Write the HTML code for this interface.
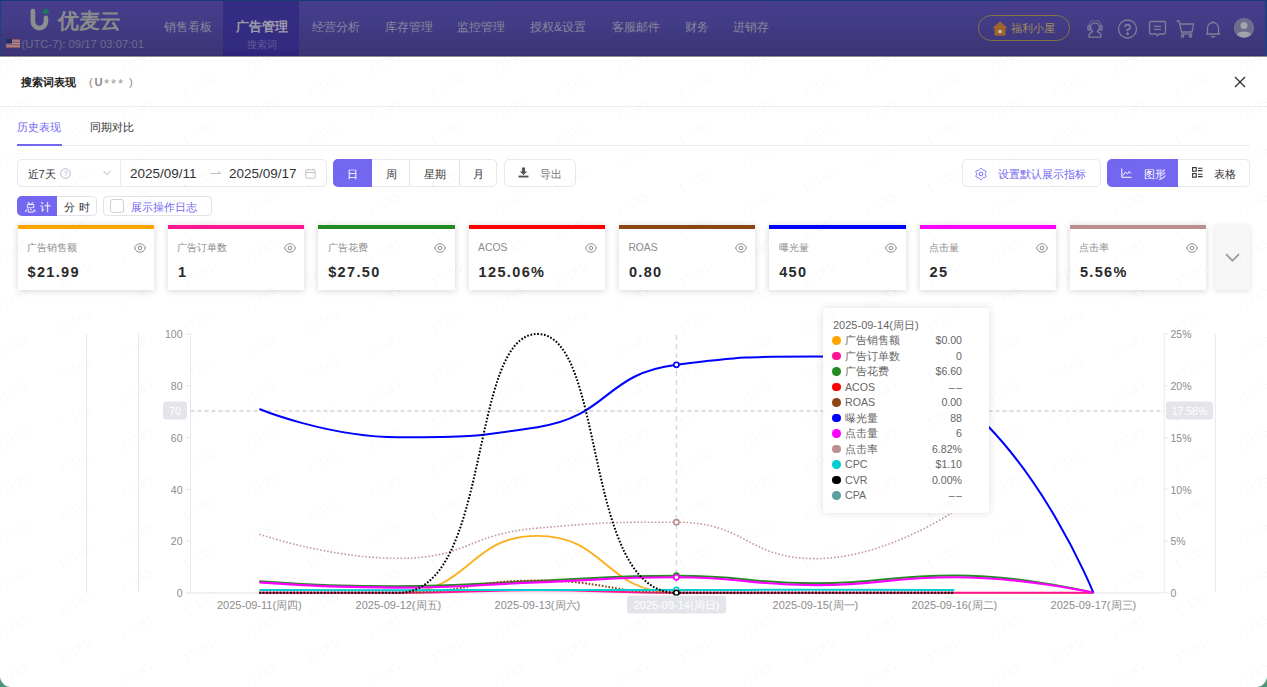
<!DOCTYPE html>
<html><head><meta charset="utf-8">
<style>
*{box-sizing:border-box;margin:0;padding:0}
html,body{width:1267px;height:687px;overflow:hidden}
body{position:relative;background:#4a9777;font-family:"Liberation Sans",sans-serif;color:#333}
.abs{position:absolute;white-space:nowrap}
#hdr{position:absolute;left:0;top:0;width:1267px;height:56px;background:linear-gradient(#463e8b,#423b85 45%,#3c3474);border-top:1px solid #173a72;border-left:1px solid #1f3f7e;border-right:2px solid #1f3f7e;border-bottom:1px solid #352d72}
.nav{position:absolute;top:20px;font-size:12px;line-height:13px;color:#88879c}
#act{position:absolute;left:222px;top:0;width:76px;height:55px;background:linear-gradient(#352c84,#332b80 85%,#2c237a)}
#modal{position:absolute;left:0;top:56px;width:1267px;height:631px;background:#fff;border-radius:0 0 11px 11px;overflow:hidden;border-top:1px solid #8e8d88}
.chart{position:absolute;left:0;top:0}
.btn{position:absolute;height:28px;top:159px;border:1px solid #e8e8ed;border-radius:5px;background:#fff}
.card{position:absolute;top:225px;width:136.6px;height:65px;background:#fff;box-shadow:0 1px 7px rgba(0,0,0,.17);border-top:4px solid}
.card .lb{position:absolute;left:9.5px;top:12px;font-size:10.3px;line-height:13px;color:#8c8c8c}
.card .val{position:absolute;left:10px;top:35px;font-size:14.5px;line-height:16px;font-weight:bold;color:#2a2a2a;letter-spacing:1.35px}
.card svg{position:absolute;left:116.3px;top:13.8px}
#tip{position:absolute;left:823px;top:308px;width:166px;height:205px;background:#fff;border-radius:4px;box-shadow:0 0 10px rgba(0,0,0,.13);font-size:10.6px;color:#666}
#tip .row{position:absolute;left:0;width:166px;height:15px}
#tip .dot{position:absolute;left:9.3px;top:3.2px;width:8.6px;height:8.6px;border-radius:50%}
#tip .nm{position:absolute;left:22px;top:0;line-height:15px}
#tip .v{position:absolute;right:27px;top:0;line-height:15px}
</style></head><body>
<div id="hdr">
  <div id="act"></div>
  <svg class="abs" style="left:27.2px;top:6.3px" width="24" height="25" viewBox="0 0 24 25">
    <path d="M4.9 4 V14.6 A6.5 6.5 0 0 0 17.9 14.6 V10.8" fill="none" stroke="#8e8e8e" stroke-width="4.7" stroke-linecap="round"/>
    <path d="M17.8 1.4 C19.5 2.4 21.2 3.6 21.2 5 C21.2 6.2 20 6.8 17.8 6.8 C15.6 6.8 14.4 6.2 14.4 5 C14.4 3.6 16.1 2.4 17.8 1.4z" fill="#177a5a"/>
  </svg>
  <div class="abs" style="left:57px;top:7px;font-size:21px;line-height:26px;font-weight:bold;color:#8b8b8b">优麦云</div>
  <svg class="abs" style="left:5px;top:38px" width="14" height="9" viewBox="0 0 14 9">
    <rect width="14" height="9" fill="#8e5560"/>
    <rect y="1.3" width="14" height="1.3" fill="#a8939a"/><rect y="3.9" width="14" height="1.3" fill="#a8939a"/><rect y="6.5" width="14" height="1.3" fill="#a8939a"/>
    <rect width="6" height="4.6" fill="#1f2e5e"/>
  </svg>
  <div class="abs" style="left:20.5px;top:36.5px;font-size:11.3px;line-height:12px;color:#6d6b8e">(UTC-7): 09/17 03:07:01</div>
  <div class="nav" style="left:163px">销售看板</div>
  <div class="nav" style="left:235px;top:19px;font-size:13px;font-weight:bold;color:#9e9daa">广告管理</div>
  <div class="abs" style="left:246px;top:38px;font-size:10px;line-height:12px;color:#625c94">搜索词</div>
  <div class="nav" style="left:311px">经营分析</div>
  <div class="nav" style="left:384px">库存管理</div>
  <div class="nav" style="left:456px">监控管理</div>
  <div class="nav" style="left:529px">授权&amp;设置</div>
  <div class="nav" style="left:611px">客服邮件</div>
  <div class="nav" style="left:684px">财务</div>
  <div class="nav" style="left:732px">进销存</div>
  <div class="abs" style="left:976.8px;top:14px;width:92px;height:26px;border:1px solid #85703f;border-radius:13px"></div>
  <svg class="abs" style="left:991px;top:19.5px" width="16" height="15" viewBox="0 0 16 15">
    <path d="M8 0.5 L15.5 7 H13.5 V14.5 H2.5 V7 H0.5z" fill="#a0652a"/>
    <rect x="6.5" y="9" width="3" height="3" fill="#d6c3a0"/>
  </svg>
  <div class="abs" style="left:1010px;top:21px;font-size:11px;line-height:13px;color:#a08c5c">福利小屋</div>
  <svg class="abs" style="left:1085px;top:18.5px" width="18" height="18" viewBox="0 0 18 18" fill="none" stroke="#7f7d98" stroke-width="1.3" stroke-linejoin="round">
    <path d="M3 17.2 V15.4 C3 13.2 5.2 12.2 6.6 11.6 C5.3 10.6 4.6 9.2 4.6 7.2 A4.4 4.4 0 0 1 13.4 7.2 C13.4 9.2 12.7 10.6 11.4 11.6 C12.8 12.2 15 13.2 15 15.4 V17.2 Z"/>
    <rect x="1.9" y="5.6" width="2" height="4.6" rx="1"/><rect x="14.1" y="5.6" width="2" height="4.6" rx="1"/>
    <path d="M3 5.8 A6 6 0 0 1 15 5.8" stroke-width="0.9"/>
  </svg>
  <svg class="abs" style="left:1115.5px;top:17.5px" width="21" height="20" viewBox="-1 -1 21 20" fill="none" stroke="#7f7d98" stroke-width="1.3">
    <circle cx="9.5" cy="9" r="9"/><path d="M7 7 A2.5 2.5 0 1 1 9.5 9.6 V11.3" stroke-width="1.7"/><circle cx="9.5" cy="13.8" r=".9" fill="#7f7d98"/>
  </svg>
  <svg class="abs" style="left:1146.8px;top:18.5px" width="19" height="18" viewBox="0 0 19 18" fill="none" stroke="#7f7d98" stroke-width="1.3">
    <path d="M3 1.5 H16 A1.5 1.5 0 0 1 17.5 3 V12.5 A1.5 1.5 0 0 1 16 14 H11 L9.5 15.8 L8 14 H3 A1.5 1.5 0 0 1 1.5 12.5 V3 A1.5 1.5 0 0 1 3 1.5z"/><path d="M6 6.3 H13 M6 9.3 H13"/>
  </svg>
  <svg class="abs" style="left:1174.5px;top:18.5px" width="19" height="18" viewBox="0 0 19 18" fill="none" stroke="#7f7d98" stroke-width="1.3">
    <path d="M0.5 1 H3 L5.5 12 H16 L17.5 4 H4"/><path d="M5 14 h11"/><circle cx="6.5" cy="16" r="1.2"/><circle cx="14.5" cy="16" r="1.2"/>
  </svg>
  <svg class="abs" style="left:1203.8px;top:18.5px" width="16" height="18" viewBox="0 0 16 18" fill="none" stroke="#7f7d98" stroke-width="1.3">
    <path d="M2.5 14 V8 A5.5 5.5 0 0 1 13.5 8 V14 H15 H1z"/><path d="M6 16 Q8 18 10 16"/><path d="M8 1 V2.5"/>
  </svg>
  <svg class="abs" style="left:1231.7px;top:16.3px" width="22" height="22" viewBox="0 0 22 22">
    <circle cx="11" cy="11" r="10.1" fill="#757190"/><circle cx="11" cy="11" r="9" fill="#6f6b8c"/>
    <circle cx="11" cy="8.6" r="3.5" fill="#a3a3ad"/><path d="M4.2 17.4 C5.6 13.6 16.4 13.6 17.8 17.4 A9.2 9.2 0 0 1 4.2 17.4z" fill="#a3a3ad"/>
  </svg>
</div>

<div id="modal">
</div>
<svg class="chart" width="1267" height="687" viewBox="0 0 1267 687">
<g><line x1="86.6" y1="334" x2="86.6" y2="592.8" stroke="#e6e8ef" stroke-width="1"/><line x1="138.5" y1="334" x2="138.5" y2="592.8" stroke="#e6e8ef" stroke-width="1"/><line x1="190.5" y1="334" x2="190.5" y2="592.8" stroke="#e6e8ef" stroke-width="1"/><line x1="1164.2" y1="334" x2="1164.2" y2="592.8" stroke="#e6e8ef" stroke-width="1"/><line x1="1215.3" y1="334" x2="1215.3" y2="592.8" stroke="#e6e8ef" stroke-width="1"/><line x1="186" y1="592.8" x2="1164.2" y2="592.8" stroke="#e6e8ef" stroke-width="1.2"/><line x1="185.5" y1="541.0" x2="190.5" y2="541.0" stroke="#e6e8ef"/><line x1="185.5" y1="489.3" x2="190.5" y2="489.3" stroke="#e6e8ef"/><line x1="185.5" y1="437.5" x2="190.5" y2="437.5" stroke="#e6e8ef"/><line x1="185.5" y1="385.8" x2="190.5" y2="385.8" stroke="#e6e8ef"/><line x1="185.5" y1="334.0" x2="190.5" y2="334.0" stroke="#e6e8ef"/><line x1="1164.2" y1="592.8" x2="1168" y2="592.8" stroke="#e6e8ef"/><line x1="1164.2" y1="541.0" x2="1168" y2="541.0" stroke="#e6e8ef"/><line x1="1164.2" y1="489.3" x2="1168" y2="489.3" stroke="#e6e8ef"/><line x1="1164.2" y1="437.5" x2="1168" y2="437.5" stroke="#e6e8ef"/><line x1="1164.2" y1="385.8" x2="1168" y2="385.8" stroke="#e6e8ef"/><line x1="1164.2" y1="334.0" x2="1168" y2="334.0" stroke="#e6e8ef"/></g>
<g fill="#8c8c8c" font-size="10.5" font-family="Liberation Sans, sans-serif"><text x="182.5" y="597.2" text-anchor="end">0</text><text x="182.5" y="545.4" text-anchor="end">20</text><text x="182.5" y="493.7" text-anchor="end">40</text><text x="182.5" y="441.9" text-anchor="end">60</text><text x="182.5" y="390.2" text-anchor="end">80</text><text x="182.5" y="338.4" text-anchor="end">100</text><text x="1170.5" y="597.2">0</text><text x="1170.5" y="545.4">5%</text><text x="1170.5" y="493.7">10%</text><text x="1170.5" y="441.9">15%</text><text x="1170.5" y="390.2">20%</text><text x="1170.5" y="338.4">25%</text><text x="259.4" y="608.8" text-anchor="middle" font-size="11">2025-09-11(周四)</text><text x="398.4" y="608.8" text-anchor="middle" font-size="11">2025-09-12(周五)</text><text x="537.4" y="608.8" text-anchor="middle" font-size="11">2025-09-13(周六)</text><text x="815.4" y="608.8" text-anchor="middle" font-size="11">2025-09-15(周一)</text><text x="954.4" y="608.8" text-anchor="middle" font-size="11">2025-09-16(周二)</text><text x="1093.4" y="608.8" text-anchor="middle" font-size="11">2025-09-17(周三)</text></g>
<g><line x1="190.5" y1="411" x2="1164" y2="411" stroke="#bdbdbd" stroke-width="1" stroke-dasharray="4 3"/><line x1="676.4" y1="335" x2="676.4" y2="592.8" stroke="#d3d6e0" stroke-width="1.3" stroke-dasharray="5 4"/></g>
<g><path d="M259.40 592.80C259.40 592.80 331.59 592.80 398.40 592.80C470.59 592.80 467.90 535.89 537.40 535.89C606.90 535.89 604.21 592.80 676.40 592.80C743.21 592.80 745.90 592.80 815.40 592.80C884.90 592.80 884.90 592.80 954.40 592.80C1023.90 592.80 1093.40 592.80 1093.40 592.80" fill="none" stroke="#fcaf1a" stroke-width="1.8" stroke-linejoin="round"/><path d="M259.40 592.80C259.40 592.80 328.91 592.80 398.40 592.80C467.91 592.80 467.90 590.21 537.40 590.21C606.90 590.21 606.89 592.80 676.40 592.80C745.89 592.80 745.90 592.80 815.40 592.80C884.90 592.80 884.90 592.80 954.40 592.80C1023.90 592.80 1093.40 592.80 1093.40 592.80" fill="none" stroke="#ff1493" stroke-width="2" stroke-linejoin="round"/><path d="M259.40 581.15C259.40 581.15 328.90 586.33 398.40 586.33C467.90 586.33 467.90 583.55 537.40 580.90C606.90 578.24 606.93 575.72 676.40 575.72C745.93 575.72 745.90 583.22 815.40 583.22C884.90 583.22 885.11 575.46 954.40 575.46C1024.11 575.46 1093.40 592.80 1093.40 592.80" fill="none" stroke="#228b22" stroke-width="2" stroke-linejoin="round"/><path d="M259.40 592.80C259.40 592.80 329.03 592.80 398.40 592.80C468.03 592.80 467.90 580.58 537.40 580.58C606.90 580.58 606.77 592.80 676.40 592.80C745.77 592.80 745.90 592.80 815.40 592.80C884.90 592.80 954.40 592.80 954.40 592.80" fill="none" stroke="#8b4513" stroke-width="2" stroke-linejoin="round" stroke-dasharray="1.7 1.7"/><path d="M259.40 409.05C259.40 409.05 328.29 437.26 398.40 437.26C467.29 437.26 470.99 437.26 537.40 427.17C609.99 416.13 603.78 373.86 676.40 364.80C742.78 356.52 747.19 356.52 815.40 356.52C886.19 356.52 902.27 356.52 954.40 396.11C1041.27 462.10 1093.40 592.80 1093.40 592.80" fill="none" stroke="#0000ff" stroke-width="2" stroke-linejoin="round"/><path d="M259.40 582.45C259.40 582.45 328.90 587.62 398.40 587.62C467.90 587.62 467.90 585.04 537.40 582.45C606.90 579.86 606.93 577.27 676.40 577.27C745.93 577.27 745.90 585.04 815.40 585.04C884.90 585.04 885.06 577.27 954.40 577.27C1024.06 577.27 1093.40 592.80 1093.40 592.80" fill="none" stroke="#ff00ff" stroke-width="2.2" stroke-linejoin="round"/><path d="M259.40 534.21C259.40 534.21 329.19 558.33 398.40 558.33C468.19 558.33 467.13 534.13 537.40 528.10C606.13 522.20 608.02 522.20 676.40 522.20C747.02 522.20 746.67 558.64 815.40 558.64C885.67 558.64 954.40 511.02 954.40 511.02" fill="none" stroke="#c49a9a" stroke-width="1.6" stroke-linejoin="round" stroke-dasharray="1.6 1.9"/><path d="M259.40 589.95C259.40 589.95 328.90 590.21 398.40 590.21C467.90 590.21 467.90 589.95 537.40 589.95C606.90 589.95 606.90 589.95 676.40 589.95C745.90 589.95 745.90 589.82 815.40 589.82C884.90 589.82 954.40 589.95 954.40 589.95" fill="none" stroke="#00ced1" stroke-width="2" stroke-linejoin="round"/><path d="M259.40 592.80C259.40 592.80 353.75 592.80 398.40 592.80C492.75 592.80 467.90 334.00 537.40 334.00C606.90 334.00 582.05 592.80 676.40 592.80C721.05 592.80 745.90 592.80 815.40 592.80C884.90 592.80 954.40 592.80 954.40 592.80" fill="none" stroke="#000000" stroke-width="2" stroke-linejoin="round" stroke-dasharray="1.7 1.7"/></g>
<g><circle cx="676.4" cy="364.8" r="2.6" fill="#fff" stroke="#0000ff" stroke-width="1.6"/><circle cx="676.4" cy="522.2" r="2.6" fill="#fff" stroke="#bc8f8f" stroke-width="1.6"/><circle cx="676.4" cy="575.7" r="2.6" fill="#fff" stroke="#228b22" stroke-width="1.6"/><circle cx="676.4" cy="577.3" r="2.6" fill="#fff" stroke="#ff00ff" stroke-width="1.6"/><circle cx="676.4" cy="590.0" r="2.6" fill="#fff" stroke="#00ced1" stroke-width="1.6"/><circle cx="676.4" cy="592.8" r="2.6" fill="#fff" stroke="#000000" stroke-width="1.6"/></g>
<rect x="163" y="401.5" width="24" height="18" rx="3" fill="#e4e5ea"/>
<text x="175" y="414.5" text-anchor="middle" fill="#fff" font-size="10.5" font-family="Liberation Sans, sans-serif">70</text>
<rect x="1166" y="401.5" width="47" height="18" rx="3" fill="#e4e5ea"/>
<text x="1189.5" y="414.5" text-anchor="middle" fill="#fff" font-size="10.5" font-family="Liberation Sans, sans-serif">17.58%</text>
<rect x="627" y="595.5" width="99" height="18" rx="3" fill="#e4e5ea"/>
<text x="676.5" y="608.8" text-anchor="middle" fill="#fff" font-size="11" font-family="Liberation Sans, sans-serif">2025-09-14(周日)</text>
</svg>
<div class="abs" style="left:20.5px;top:75.3px;font-size:11.2px;line-height:14px;font-weight:bold;color:#222">搜索词表现</div>
<div class="abs" style="left:89px;top:75px;font-size:11.2px;line-height:14px;color:#888">(</div>
<div class="abs" style="left:94.5px;top:75px;font-size:11.2px;line-height:14px;font-weight:bold;color:#8a8a8a">U</div>
<div class="abs" style="left:104px;top:76.8px;font-size:13px;line-height:14px;color:#999;letter-spacing:2px">***</div>
<div class="abs" style="left:129px;top:75px;font-size:11.2px;line-height:14px;color:#888">)</div>
<svg class="abs" style="left:1233.5px;top:75.5px" width="12" height="12" viewBox="0 0 12 12"><path d="M1 1 L11 11 M11 1 L1 11" stroke="#333" stroke-width="1.4"/></svg>
<div class="abs" style="left:0;top:106px;width:1267px;height:1px;background:#eeeeee"></div>
<div class="abs" style="left:17px;top:119.5px;font-size:11.2px;line-height:14px;color:#7367f0">历史表现</div>
<div class="abs" style="left:90px;top:119.5px;font-size:11.2px;line-height:14px;color:#333">同期对比</div>
<div class="abs" style="left:17px;top:145px;width:1233px;height:1px;background:#ececec"></div>
<div class="abs" style="left:17px;top:144px;width:45px;height:2px;background:#7367f0"></div>

<!-- controls -->
<div class="btn" style="left:17px;width:310px"></div>
<div class="abs" style="left:120px;top:160px;width:1px;height:26px;background:#ececf0"></div>
<div class="abs" style="left:27.5px;top:167px;font-size:11.2px;line-height:14px;color:#333">近7天</div>
<svg class="abs" style="left:60px;top:168px" width="11" height="11" viewBox="0 0 11 11"><circle cx="5.5" cy="5.5" r="4.8" fill="none" stroke="#a5b0c6" stroke-width=".9"/><text x="5.5" y="8.3" font-size="7.5" text-anchor="middle" fill="#a5b0c6" font-family="Liberation Sans, sans-serif">?</text></svg>
<svg class="abs" style="left:103px;top:170px" width="8" height="6" viewBox="0 0 8 6"><path d="M0.5 0.8 L4 4.8 L7.5 0.8" fill="none" stroke="#b5b5b5" stroke-width="1"/></svg>
<div class="abs" style="left:130px;top:167px;font-size:13.5px;line-height:14px;color:#333">2025/09/11</div>
<svg class="abs" style="left:210px;top:170px" width="12" height="6" viewBox="0 0 12 6"><path d="M0.5 3.5 H10.5 M8 1.2 L10.8 3.5" fill="none" stroke="#bdbdbd" stroke-width="1"/></svg>
<div class="abs" style="left:229px;top:167px;font-size:13.5px;line-height:14px;color:#333">2025/09/17</div>
<svg class="abs" style="left:305px;top:168px" width="11" height="11" viewBox="0 0 11 11" fill="none" stroke="#c4c4c4" stroke-width="1"><rect x="0.8" y="1.8" width="9.4" height="8.4" rx=".5"/><path d="M0.8 4.5 H10.2 M3 0.5 V2.5 M8 0.5 V2.5"/></svg>

<div class="btn" style="left:333px;width:164px"></div>
<div class="abs" style="left:333px;top:159px;width:39px;height:28px;background:#7367f0;border-radius:5px 0 0 5px"></div>
<div class="abs" style="left:409px;top:160px;width:1px;height:26px;background:#e3e3e8"></div>
<div class="abs" style="left:459px;top:160px;width:1px;height:26px;background:#e3e3e8"></div>
<div class="abs" style="left:347px;top:167px;font-size:11.2px;line-height:14px;color:#fff">日</div>
<div class="abs" style="left:385.5px;top:167px;font-size:11.2px;line-height:14px;color:#333">周</div>
<div class="abs" style="left:423.5px;top:167px;font-size:11.2px;line-height:14px;color:#333">星期</div>
<div class="abs" style="left:473px;top:167px;font-size:11.2px;line-height:14px;color:#333">月</div>

<div class="btn" style="left:504px;width:72px"></div>
<svg class="abs" style="left:518px;top:167px" width="11" height="11" viewBox="0 0 11 11" fill="#555"><path d="M4 0.5 H7 V4.5 H9.3 L5.5 8 L1.7 4.5 H4z"/><rect x="0.5" y="8.6" width="10" height="1.9"/></svg>
<div class="abs" style="left:539.5px;top:167px;font-size:11.2px;line-height:14px;color:#777">导出</div>

<div class="btn" style="left:962px;width:139px"></div>
<svg class="abs" style="left:975.3px;top:167.5px" width="12" height="12" viewBox="0 0 12 12" fill="none" stroke="#7367f0" stroke-width="1"><path d="M10.89 8.82 L10.55 9.18 L10.04 9.39 L9.46 9.46 L8.91 9.47 L8.55 9.65 L8.23 9.85 L7.88 10.03 L7.55 10.25 L7.27 10.73 L6.92 11.19 L6.48 11.53 L6.00 11.65 L5.52 11.53 L5.08 11.19 L4.73 10.73 L4.45 10.25 L4.12 10.03 L3.78 9.85 L3.45 9.65 L3.09 9.47 L2.54 9.46 L1.96 9.39 L1.45 9.18 L1.11 8.83 L0.97 8.35 L1.04 7.80 L1.27 7.27 L1.54 6.79 L1.57 6.39 L1.55 6.00 L1.57 5.61 L1.54 5.21 L1.27 4.73 L1.04 4.20 L0.97 3.65 L1.11 3.18 L1.45 2.82 L1.96 2.61 L2.54 2.54 L3.09 2.53 L3.45 2.35 L3.78 2.15 L4.12 1.97 L4.45 1.75 L4.73 1.27 L5.08 0.81 L5.52 0.47 L6.00 0.35 L6.48 0.47 L6.92 0.81 L7.27 1.27 L7.55 1.75 L7.88 1.97 L8.23 2.15 L8.55 2.35 L8.91 2.53 L9.46 2.54 L10.04 2.61 L10.55 2.82 L10.89 3.17 L11.03 3.65 L10.96 4.20 L10.73 4.73 L10.46 5.21 L10.43 5.61 L10.45 6.00 L10.43 6.39 L10.46 6.79 L10.73 7.27 L10.96 7.80 L11.03 8.35 L10.89 8.82z"/><circle cx="6" cy="6" r="1.9"/></svg>
<div class="abs" style="left:998px;top:167px;font-size:11.2px;line-height:14px;color:#7367f0">设置默认展示指标</div>

<div class="btn" style="left:1107px;width:143px"></div>
<div class="abs" style="left:1107px;top:159px;width:71px;height:28px;background:#7367f0;border-radius:5px 0 0 5px"></div>
<svg class="abs" style="left:1121px;top:168px" width="11" height="10" viewBox="0 0 11 10" fill="none" stroke="#fff" stroke-width="1"><path d="M0.8 0.5 V9.3 H10.5"/><path d="M2 7.5 L4.5 4 L6.5 5.8 L8.3 3.5 L10 5.5"/></svg>
<div class="abs" style="left:1143.5px;top:167px;font-size:11.2px;line-height:14px;color:#fff">图形</div>
<svg class="abs" style="left:1192px;top:167px" width="11" height="11" viewBox="0 0 11 11" fill="none" stroke="#333" stroke-width="1.1"><rect x="0.6" y="0.6" width="3.6" height="3.6"/><rect x="0.6" y="6.6" width="3.6" height="3.6"/><path d="M6 1.2 H10.5 M6 3.6 H10.5 M6 7.2 H10.5 M6 9.6 H10.5"/></svg>
<div class="abs" style="left:1214px;top:167px;font-size:11.2px;line-height:14px;color:#333">表格</div>

<!-- row 2 -->
<div class="abs" style="left:17px;top:196px;width:80px;height:20px;border:1px solid #e3e3e8;border-radius:4px;background:#fff"></div>
<div class="abs" style="left:17px;top:196px;width:40px;height:20px;background:#7367f0;border-radius:5px 0 0 5px"></div>
<div class="abs" style="left:24.5px;top:200px;font-size:11.2px;line-height:14px;color:#fff;letter-spacing:4px">总计</div>
<div class="abs" style="left:63.5px;top:200px;font-size:11.2px;line-height:14px;color:#333;letter-spacing:4px">分时</div>
<div class="abs" style="left:103px;top:196px;width:109px;height:20px;border:1px solid #e3e3e8;border-radius:4px;background:#fff"></div>
<div class="abs" style="left:110px;top:199px;width:14px;height:14px;border:1px solid #d0d0d5;border-radius:3px;background:#fff"></div>
<div class="abs" style="left:131px;top:200px;font-size:11.2px;line-height:14px;color:#7367f0">展示操作日志</div>

<!-- cards -->
<div class="card" style="left:17.5px;border-color:#ffa500"><div class="lb">广告销售额</div><svg width="12" height="10" viewBox="0 0 12 10" fill="none" stroke="#8a8a8a" stroke-width="1"><path d="M0.6 5 C1.8 1.6 4 0.8 6 0.8 C8 0.8 10.2 1.6 11.4 5 C10.2 8.4 8 9.2 6 9.2 C4 9.2 1.8 8.4 0.6 5z"/><circle cx="6" cy="5" r="1.8"/></svg><div class="val">$21.99</div></div>
<div class="card" style="left:167.9px;border-color:#ff1493"><div class="lb">广告订单数</div><svg width="12" height="10" viewBox="0 0 12 10" fill="none" stroke="#8a8a8a" stroke-width="1"><path d="M0.6 5 C1.8 1.6 4 0.8 6 0.8 C8 0.8 10.2 1.6 11.4 5 C10.2 8.4 8 9.2 6 9.2 C4 9.2 1.8 8.4 0.6 5z"/><circle cx="6" cy="5" r="1.8"/></svg><div class="val">1</div></div>
<div class="card" style="left:318.2px;border-color:#228b22"><div class="lb">广告花费</div><svg width="12" height="10" viewBox="0 0 12 10" fill="none" stroke="#8a8a8a" stroke-width="1"><path d="M0.6 5 C1.8 1.6 4 0.8 6 0.8 C8 0.8 10.2 1.6 11.4 5 C10.2 8.4 8 9.2 6 9.2 C4 9.2 1.8 8.4 0.6 5z"/><circle cx="6" cy="5" r="1.8"/></svg><div class="val">$27.50</div></div>
<div class="card" style="left:468.6px;border-color:#ff0000"><div class="lb">ACOS</div><svg width="12" height="10" viewBox="0 0 12 10" fill="none" stroke="#8a8a8a" stroke-width="1"><path d="M0.6 5 C1.8 1.6 4 0.8 6 0.8 C8 0.8 10.2 1.6 11.4 5 C10.2 8.4 8 9.2 6 9.2 C4 9.2 1.8 8.4 0.6 5z"/><circle cx="6" cy="5" r="1.8"/></svg><div class="val">125.06%</div></div>
<div class="card" style="left:618.9px;border-color:#8b4513"><div class="lb">ROAS</div><svg width="12" height="10" viewBox="0 0 12 10" fill="none" stroke="#8a8a8a" stroke-width="1"><path d="M0.6 5 C1.8 1.6 4 0.8 6 0.8 C8 0.8 10.2 1.6 11.4 5 C10.2 8.4 8 9.2 6 9.2 C4 9.2 1.8 8.4 0.6 5z"/><circle cx="6" cy="5" r="1.8"/></svg><div class="val">0.80</div></div>
<div class="card" style="left:769.2px;border-color:#0000ff"><div class="lb">曝光量</div><svg width="12" height="10" viewBox="0 0 12 10" fill="none" stroke="#8a8a8a" stroke-width="1"><path d="M0.6 5 C1.8 1.6 4 0.8 6 0.8 C8 0.8 10.2 1.6 11.4 5 C10.2 8.4 8 9.2 6 9.2 C4 9.2 1.8 8.4 0.6 5z"/><circle cx="6" cy="5" r="1.8"/></svg><div class="val">450</div></div>
<div class="card" style="left:919.6px;border-color:#ff00ff"><div class="lb">点击量</div><svg width="12" height="10" viewBox="0 0 12 10" fill="none" stroke="#8a8a8a" stroke-width="1"><path d="M0.6 5 C1.8 1.6 4 0.8 6 0.8 C8 0.8 10.2 1.6 11.4 5 C10.2 8.4 8 9.2 6 9.2 C4 9.2 1.8 8.4 0.6 5z"/><circle cx="6" cy="5" r="1.8"/></svg><div class="val">25</div></div>
<div class="card" style="left:1069.9px;border-color:#bc8f8f"><div class="lb">点击率</div><svg width="12" height="10" viewBox="0 0 12 10" fill="none" stroke="#8a8a8a" stroke-width="1"><path d="M0.6 5 C1.8 1.6 4 0.8 6 0.8 C8 0.8 10.2 1.6 11.4 5 C10.2 8.4 8 9.2 6 9.2 C4 9.2 1.8 8.4 0.6 5z"/><circle cx="6" cy="5" r="1.8"/></svg><div class="val">5.56%</div></div>
<div class="abs" style="left:1215px;top:225px;width:35px;height:65px;background:#f7f7f7;box-shadow:0 1px 5px rgba(0,0,0,.12)"></div>
<svg class="abs" style="left:1225.2px;top:252.6px" width="15" height="10" viewBox="0 0 15 10"><path d="M1 1.2 L7.5 7.7 L14 1.2" fill="none" stroke="#999" stroke-width="1.7"/></svg>

<!-- tooltip -->
<div id="tip">
  <div class="abs" style="left:10px;top:11.3px;line-height:12px;font-size:11px;color:#666">2025-09-14(周日)</div>
  <div class="row" style="top:25px"><span class="dot" style="background:#ffa500"></span><span class="nm">广告销售额</span><span class="v">$0.00</span></div>
  <div class="row" style="top:40.5px"><span class="dot" style="background:#ff1493"></span><span class="nm">广告订单数</span><span class="v">0</span></div>
  <div class="row" style="top:56px"><span class="dot" style="background:#228b22"></span><span class="nm">广告花费</span><span class="v">$6.60</span></div>
  <div class="row" style="top:71.5px"><span class="dot" style="background:#ff0000"></span><span class="nm">ACOS</span><span class="v" style="letter-spacing:1.6px;right:25.4px">––</span></div>
  <div class="row" style="top:87px"><span class="dot" style="background:#8b4513"></span><span class="nm">ROAS</span><span class="v">0.00</span></div>
  <div class="row" style="top:102.5px"><span class="dot" style="background:#0000ff"></span><span class="nm">曝光量</span><span class="v">88</span></div>
  <div class="row" style="top:118px"><span class="dot" style="background:#ff00ff"></span><span class="nm">点击量</span><span class="v">6</span></div>
  <div class="row" style="top:133.5px"><span class="dot" style="background:#bc8f8f"></span><span class="nm">点击率</span><span class="v">6.82%</span></div>
  <div class="row" style="top:149px"><span class="dot" style="background:#00ced1"></span><span class="nm">CPC</span><span class="v">$1.10</span></div>
  <div class="row" style="top:164.5px"><span class="dot" style="background:#000"></span><span class="nm">CVR</span><span class="v">0.00%</span></div>
  <div class="row" style="top:180px"><span class="dot" style="background:#5f9ea0"></span><span class="nm">CPA</span><span class="v" style="letter-spacing:1.6px;right:25.4px">––</span></div>
</div>
<svg class="abs" style="left:0;top:0;pointer-events:none" width="1267" height="687"><defs><clipPath id="mc"><rect x="0" y="57" width="1267" height="630"/></clipPath></defs><g clip-path="url(#mc)" fill="#000" fill-opacity="0.04" font-size="12.5" text-rendering="geometricPrecision" font-family="Liberation Sans, sans-serif"><text transform="translate(-111.4 63.5) rotate(-30)" text-anchor="middle" dy="4">17185</text><text transform="translate(-49.4 87.0) rotate(-30)" text-anchor="middle" dy="4">17185</text><text transform="translate(12.6 63.5) rotate(-30)" text-anchor="middle" dy="4">17185</text><text transform="translate(74.6 87.0) rotate(-30)" text-anchor="middle" dy="4">17185</text><text transform="translate(136.6 63.5) rotate(-30)" text-anchor="middle" dy="4">17185</text><text transform="translate(198.6 87.0) rotate(-30)" text-anchor="middle" dy="4">17185</text><text transform="translate(260.6 63.5) rotate(-30)" text-anchor="middle" dy="4">17185</text><text transform="translate(322.6 87.0) rotate(-30)" text-anchor="middle" dy="4">17185</text><text transform="translate(384.6 63.5) rotate(-30)" text-anchor="middle" dy="4">17185</text><text transform="translate(446.6 87.0) rotate(-30)" text-anchor="middle" dy="4">17185</text><text transform="translate(508.6 63.5) rotate(-30)" text-anchor="middle" dy="4">17185</text><text transform="translate(570.6 87.0) rotate(-30)" text-anchor="middle" dy="4">17185</text><text transform="translate(632.6 63.5) rotate(-30)" text-anchor="middle" dy="4">17185</text><text transform="translate(694.6 87.0) rotate(-30)" text-anchor="middle" dy="4">17185</text><text transform="translate(756.6 63.5) rotate(-30)" text-anchor="middle" dy="4">17185</text><text transform="translate(818.6 87.0) rotate(-30)" text-anchor="middle" dy="4">17185</text><text transform="translate(880.6 63.5) rotate(-30)" text-anchor="middle" dy="4">17185</text><text transform="translate(942.6 87.0) rotate(-30)" text-anchor="middle" dy="4">17185</text><text transform="translate(1004.6 63.5) rotate(-30)" text-anchor="middle" dy="4">17185</text><text transform="translate(1066.6 87.0) rotate(-30)" text-anchor="middle" dy="4">17185</text><text transform="translate(1128.6 63.5) rotate(-30)" text-anchor="middle" dy="4">17185</text><text transform="translate(1190.6 87.0) rotate(-30)" text-anchor="middle" dy="4">17185</text><text transform="translate(1252.6 63.5) rotate(-30)" text-anchor="middle" dy="4">17185</text><text transform="translate(1314.6 87.0) rotate(-30)" text-anchor="middle" dy="4">17185</text><text transform="translate(1376.6 63.5) rotate(-30)" text-anchor="middle" dy="4">17185</text><text transform="translate(1438.6 87.0) rotate(-30)" text-anchor="middle" dy="4">17185</text><text transform="translate(-111.4 110.5) rotate(-30)" text-anchor="middle" dy="4">17185</text><text transform="translate(-49.4 134.0) rotate(-30)" text-anchor="middle" dy="4">17185</text><text transform="translate(12.6 110.5) rotate(-30)" text-anchor="middle" dy="4">17185</text><text transform="translate(74.6 134.0) rotate(-30)" text-anchor="middle" dy="4">17185</text><text transform="translate(136.6 110.5) rotate(-30)" text-anchor="middle" dy="4">17185</text><text transform="translate(198.6 134.0) rotate(-30)" text-anchor="middle" dy="4">17185</text><text transform="translate(260.6 110.5) rotate(-30)" text-anchor="middle" dy="4">17185</text><text transform="translate(322.6 134.0) rotate(-30)" text-anchor="middle" dy="4">17185</text><text transform="translate(384.6 110.5) rotate(-30)" text-anchor="middle" dy="4">17185</text><text transform="translate(446.6 134.0) rotate(-30)" text-anchor="middle" dy="4">17185</text><text transform="translate(508.6 110.5) rotate(-30)" text-anchor="middle" dy="4">17185</text><text transform="translate(570.6 134.0) rotate(-30)" text-anchor="middle" dy="4">17185</text><text transform="translate(632.6 110.5) rotate(-30)" text-anchor="middle" dy="4">17185</text><text transform="translate(694.6 134.0) rotate(-30)" text-anchor="middle" dy="4">17185</text><text transform="translate(756.6 110.5) rotate(-30)" text-anchor="middle" dy="4">17185</text><text transform="translate(818.6 134.0) rotate(-30)" text-anchor="middle" dy="4">17185</text><text transform="translate(880.6 110.5) rotate(-30)" text-anchor="middle" dy="4">17185</text><text transform="translate(942.6 134.0) rotate(-30)" text-anchor="middle" dy="4">17185</text><text transform="translate(1004.6 110.5) rotate(-30)" text-anchor="middle" dy="4">17185</text><text transform="translate(1066.6 134.0) rotate(-30)" text-anchor="middle" dy="4">17185</text><text transform="translate(1128.6 110.5) rotate(-30)" text-anchor="middle" dy="4">17185</text><text transform="translate(1190.6 134.0) rotate(-30)" text-anchor="middle" dy="4">17185</text><text transform="translate(1252.6 110.5) rotate(-30)" text-anchor="middle" dy="4">17185</text><text transform="translate(1314.6 134.0) rotate(-30)" text-anchor="middle" dy="4">17185</text><text transform="translate(1376.6 110.5) rotate(-30)" text-anchor="middle" dy="4">17185</text><text transform="translate(1438.6 134.0) rotate(-30)" text-anchor="middle" dy="4">17185</text><text transform="translate(-111.4 157.5) rotate(-30)" text-anchor="middle" dy="4">17185</text><text transform="translate(-49.4 181.0) rotate(-30)" text-anchor="middle" dy="4">17185</text><text transform="translate(12.6 157.5) rotate(-30)" text-anchor="middle" dy="4">17185</text><text transform="translate(74.6 181.0) rotate(-30)" text-anchor="middle" dy="4">17185</text><text transform="translate(136.6 157.5) rotate(-30)" text-anchor="middle" dy="4">17185</text><text transform="translate(198.6 181.0) rotate(-30)" text-anchor="middle" dy="4">17185</text><text transform="translate(260.6 157.5) rotate(-30)" text-anchor="middle" dy="4">17185</text><text transform="translate(322.6 181.0) rotate(-30)" text-anchor="middle" dy="4">17185</text><text transform="translate(384.6 157.5) rotate(-30)" text-anchor="middle" dy="4">17185</text><text transform="translate(446.6 181.0) rotate(-30)" text-anchor="middle" dy="4">17185</text><text transform="translate(508.6 157.5) rotate(-30)" text-anchor="middle" dy="4">17185</text><text transform="translate(570.6 181.0) rotate(-30)" text-anchor="middle" dy="4">17185</text><text transform="translate(632.6 157.5) rotate(-30)" text-anchor="middle" dy="4">17185</text><text transform="translate(694.6 181.0) rotate(-30)" text-anchor="middle" dy="4">17185</text><text transform="translate(756.6 157.5) rotate(-30)" text-anchor="middle" dy="4">17185</text><text transform="translate(818.6 181.0) rotate(-30)" text-anchor="middle" dy="4">17185</text><text transform="translate(880.6 157.5) rotate(-30)" text-anchor="middle" dy="4">17185</text><text transform="translate(942.6 181.0) rotate(-30)" text-anchor="middle" dy="4">17185</text><text transform="translate(1004.6 157.5) rotate(-30)" text-anchor="middle" dy="4">17185</text><text transform="translate(1066.6 181.0) rotate(-30)" text-anchor="middle" dy="4">17185</text><text transform="translate(1128.6 157.5) rotate(-30)" text-anchor="middle" dy="4">17185</text><text transform="translate(1190.6 181.0) rotate(-30)" text-anchor="middle" dy="4">17185</text><text transform="translate(1252.6 157.5) rotate(-30)" text-anchor="middle" dy="4">17185</text><text transform="translate(1314.6 181.0) rotate(-30)" text-anchor="middle" dy="4">17185</text><text transform="translate(1376.6 157.5) rotate(-30)" text-anchor="middle" dy="4">17185</text><text transform="translate(1438.6 181.0) rotate(-30)" text-anchor="middle" dy="4">17185</text><text transform="translate(-111.4 204.5) rotate(-30)" text-anchor="middle" dy="4">17185</text><text transform="translate(-49.4 228.0) rotate(-30)" text-anchor="middle" dy="4">17185</text><text transform="translate(12.6 204.5) rotate(-30)" text-anchor="middle" dy="4">17185</text><text transform="translate(74.6 228.0) rotate(-30)" text-anchor="middle" dy="4">17185</text><text transform="translate(136.6 204.5) rotate(-30)" text-anchor="middle" dy="4">17185</text><text transform="translate(198.6 228.0) rotate(-30)" text-anchor="middle" dy="4">17185</text><text transform="translate(260.6 204.5) rotate(-30)" text-anchor="middle" dy="4">17185</text><text transform="translate(322.6 228.0) rotate(-30)" text-anchor="middle" dy="4">17185</text><text transform="translate(384.6 204.5) rotate(-30)" text-anchor="middle" dy="4">17185</text><text transform="translate(446.6 228.0) rotate(-30)" text-anchor="middle" dy="4">17185</text><text transform="translate(508.6 204.5) rotate(-30)" text-anchor="middle" dy="4">17185</text><text transform="translate(570.6 228.0) rotate(-30)" text-anchor="middle" dy="4">17185</text><text transform="translate(632.6 204.5) rotate(-30)" text-anchor="middle" dy="4">17185</text><text transform="translate(694.6 228.0) rotate(-30)" text-anchor="middle" dy="4">17185</text><text transform="translate(756.6 204.5) rotate(-30)" text-anchor="middle" dy="4">17185</text><text transform="translate(818.6 228.0) rotate(-30)" text-anchor="middle" dy="4">17185</text><text transform="translate(880.6 204.5) rotate(-30)" text-anchor="middle" dy="4">17185</text><text transform="translate(942.6 228.0) rotate(-30)" text-anchor="middle" dy="4">17185</text><text transform="translate(1004.6 204.5) rotate(-30)" text-anchor="middle" dy="4">17185</text><text transform="translate(1066.6 228.0) rotate(-30)" text-anchor="middle" dy="4">17185</text><text transform="translate(1128.6 204.5) rotate(-30)" text-anchor="middle" dy="4">17185</text><text transform="translate(1190.6 228.0) rotate(-30)" text-anchor="middle" dy="4">17185</text><text transform="translate(1252.6 204.5) rotate(-30)" text-anchor="middle" dy="4">17185</text><text transform="translate(1314.6 228.0) rotate(-30)" text-anchor="middle" dy="4">17185</text><text transform="translate(1376.6 204.5) rotate(-30)" text-anchor="middle" dy="4">17185</text><text transform="translate(1438.6 228.0) rotate(-30)" text-anchor="middle" dy="4">17185</text><text transform="translate(-111.4 251.5) rotate(-30)" text-anchor="middle" dy="4">17185</text><text transform="translate(-49.4 275.0) rotate(-30)" text-anchor="middle" dy="4">17185</text><text transform="translate(12.6 251.5) rotate(-30)" text-anchor="middle" dy="4">17185</text><text transform="translate(74.6 275.0) rotate(-30)" text-anchor="middle" dy="4">17185</text><text transform="translate(136.6 251.5) rotate(-30)" text-anchor="middle" dy="4">17185</text><text transform="translate(198.6 275.0) rotate(-30)" text-anchor="middle" dy="4">17185</text><text transform="translate(260.6 251.5) rotate(-30)" text-anchor="middle" dy="4">17185</text><text transform="translate(322.6 275.0) rotate(-30)" text-anchor="middle" dy="4">17185</text><text transform="translate(384.6 251.5) rotate(-30)" text-anchor="middle" dy="4">17185</text><text transform="translate(446.6 275.0) rotate(-30)" text-anchor="middle" dy="4">17185</text><text transform="translate(508.6 251.5) rotate(-30)" text-anchor="middle" dy="4">17185</text><text transform="translate(570.6 275.0) rotate(-30)" text-anchor="middle" dy="4">17185</text><text transform="translate(632.6 251.5) rotate(-30)" text-anchor="middle" dy="4">17185</text><text transform="translate(694.6 275.0) rotate(-30)" text-anchor="middle" dy="4">17185</text><text transform="translate(756.6 251.5) rotate(-30)" text-anchor="middle" dy="4">17185</text><text transform="translate(818.6 275.0) rotate(-30)" text-anchor="middle" dy="4">17185</text><text transform="translate(880.6 251.5) rotate(-30)" text-anchor="middle" dy="4">17185</text><text transform="translate(942.6 275.0) rotate(-30)" text-anchor="middle" dy="4">17185</text><text transform="translate(1004.6 251.5) rotate(-30)" text-anchor="middle" dy="4">17185</text><text transform="translate(1066.6 275.0) rotate(-30)" text-anchor="middle" dy="4">17185</text><text transform="translate(1128.6 251.5) rotate(-30)" text-anchor="middle" dy="4">17185</text><text transform="translate(1190.6 275.0) rotate(-30)" text-anchor="middle" dy="4">17185</text><text transform="translate(1252.6 251.5) rotate(-30)" text-anchor="middle" dy="4">17185</text><text transform="translate(1314.6 275.0) rotate(-30)" text-anchor="middle" dy="4">17185</text><text transform="translate(1376.6 251.5) rotate(-30)" text-anchor="middle" dy="4">17185</text><text transform="translate(1438.6 275.0) rotate(-30)" text-anchor="middle" dy="4">17185</text><text transform="translate(-111.4 298.5) rotate(-30)" text-anchor="middle" dy="4">17185</text><text transform="translate(-49.4 322.0) rotate(-30)" text-anchor="middle" dy="4">17185</text><text transform="translate(12.6 298.5) rotate(-30)" text-anchor="middle" dy="4">17185</text><text transform="translate(74.6 322.0) rotate(-30)" text-anchor="middle" dy="4">17185</text><text transform="translate(136.6 298.5) rotate(-30)" text-anchor="middle" dy="4">17185</text><text transform="translate(198.6 322.0) rotate(-30)" text-anchor="middle" dy="4">17185</text><text transform="translate(260.6 298.5) rotate(-30)" text-anchor="middle" dy="4">17185</text><text transform="translate(322.6 322.0) rotate(-30)" text-anchor="middle" dy="4">17185</text><text transform="translate(384.6 298.5) rotate(-30)" text-anchor="middle" dy="4">17185</text><text transform="translate(446.6 322.0) rotate(-30)" text-anchor="middle" dy="4">17185</text><text transform="translate(508.6 298.5) rotate(-30)" text-anchor="middle" dy="4">17185</text><text transform="translate(570.6 322.0) rotate(-30)" text-anchor="middle" dy="4">17185</text><text transform="translate(632.6 298.5) rotate(-30)" text-anchor="middle" dy="4">17185</text><text transform="translate(694.6 322.0) rotate(-30)" text-anchor="middle" dy="4">17185</text><text transform="translate(756.6 298.5) rotate(-30)" text-anchor="middle" dy="4">17185</text><text transform="translate(818.6 322.0) rotate(-30)" text-anchor="middle" dy="4">17185</text><text transform="translate(880.6 298.5) rotate(-30)" text-anchor="middle" dy="4">17185</text><text transform="translate(942.6 322.0) rotate(-30)" text-anchor="middle" dy="4">17185</text><text transform="translate(1004.6 298.5) rotate(-30)" text-anchor="middle" dy="4">17185</text><text transform="translate(1066.6 322.0) rotate(-30)" text-anchor="middle" dy="4">17185</text><text transform="translate(1128.6 298.5) rotate(-30)" text-anchor="middle" dy="4">17185</text><text transform="translate(1190.6 322.0) rotate(-30)" text-anchor="middle" dy="4">17185</text><text transform="translate(1252.6 298.5) rotate(-30)" text-anchor="middle" dy="4">17185</text><text transform="translate(1314.6 322.0) rotate(-30)" text-anchor="middle" dy="4">17185</text><text transform="translate(1376.6 298.5) rotate(-30)" text-anchor="middle" dy="4">17185</text><text transform="translate(1438.6 322.0) rotate(-30)" text-anchor="middle" dy="4">17185</text><text transform="translate(-111.4 345.5) rotate(-30)" text-anchor="middle" dy="4">17185</text><text transform="translate(-49.4 369.0) rotate(-30)" text-anchor="middle" dy="4">17185</text><text transform="translate(12.6 345.5) rotate(-30)" text-anchor="middle" dy="4">17185</text><text transform="translate(74.6 369.0) rotate(-30)" text-anchor="middle" dy="4">17185</text><text transform="translate(136.6 345.5) rotate(-30)" text-anchor="middle" dy="4">17185</text><text transform="translate(198.6 369.0) rotate(-30)" text-anchor="middle" dy="4">17185</text><text transform="translate(260.6 345.5) rotate(-30)" text-anchor="middle" dy="4">17185</text><text transform="translate(322.6 369.0) rotate(-30)" text-anchor="middle" dy="4">17185</text><text transform="translate(384.6 345.5) rotate(-30)" text-anchor="middle" dy="4">17185</text><text transform="translate(446.6 369.0) rotate(-30)" text-anchor="middle" dy="4">17185</text><text transform="translate(508.6 345.5) rotate(-30)" text-anchor="middle" dy="4">17185</text><text transform="translate(570.6 369.0) rotate(-30)" text-anchor="middle" dy="4">17185</text><text transform="translate(632.6 345.5) rotate(-30)" text-anchor="middle" dy="4">17185</text><text transform="translate(694.6 369.0) rotate(-30)" text-anchor="middle" dy="4">17185</text><text transform="translate(756.6 345.5) rotate(-30)" text-anchor="middle" dy="4">17185</text><text transform="translate(818.6 369.0) rotate(-30)" text-anchor="middle" dy="4">17185</text><text transform="translate(880.6 345.5) rotate(-30)" text-anchor="middle" dy="4">17185</text><text transform="translate(942.6 369.0) rotate(-30)" text-anchor="middle" dy="4">17185</text><text transform="translate(1004.6 345.5) rotate(-30)" text-anchor="middle" dy="4">17185</text><text transform="translate(1066.6 369.0) rotate(-30)" text-anchor="middle" dy="4">17185</text><text transform="translate(1128.6 345.5) rotate(-30)" text-anchor="middle" dy="4">17185</text><text transform="translate(1190.6 369.0) rotate(-30)" text-anchor="middle" dy="4">17185</text><text transform="translate(1252.6 345.5) rotate(-30)" text-anchor="middle" dy="4">17185</text><text transform="translate(1314.6 369.0) rotate(-30)" text-anchor="middle" dy="4">17185</text><text transform="translate(1376.6 345.5) rotate(-30)" text-anchor="middle" dy="4">17185</text><text transform="translate(1438.6 369.0) rotate(-30)" text-anchor="middle" dy="4">17185</text><text transform="translate(-111.4 392.5) rotate(-30)" text-anchor="middle" dy="4">17185</text><text transform="translate(-49.4 416.0) rotate(-30)" text-anchor="middle" dy="4">17185</text><text transform="translate(12.6 392.5) rotate(-30)" text-anchor="middle" dy="4">17185</text><text transform="translate(74.6 416.0) rotate(-30)" text-anchor="middle" dy="4">17185</text><text transform="translate(136.6 392.5) rotate(-30)" text-anchor="middle" dy="4">17185</text><text transform="translate(198.6 416.0) rotate(-30)" text-anchor="middle" dy="4">17185</text><text transform="translate(260.6 392.5) rotate(-30)" text-anchor="middle" dy="4">17185</text><text transform="translate(322.6 416.0) rotate(-30)" text-anchor="middle" dy="4">17185</text><text transform="translate(384.6 392.5) rotate(-30)" text-anchor="middle" dy="4">17185</text><text transform="translate(446.6 416.0) rotate(-30)" text-anchor="middle" dy="4">17185</text><text transform="translate(508.6 392.5) rotate(-30)" text-anchor="middle" dy="4">17185</text><text transform="translate(570.6 416.0) rotate(-30)" text-anchor="middle" dy="4">17185</text><text transform="translate(632.6 392.5) rotate(-30)" text-anchor="middle" dy="4">17185</text><text transform="translate(694.6 416.0) rotate(-30)" text-anchor="middle" dy="4">17185</text><text transform="translate(756.6 392.5) rotate(-30)" text-anchor="middle" dy="4">17185</text><text transform="translate(818.6 416.0) rotate(-30)" text-anchor="middle" dy="4">17185</text><text transform="translate(880.6 392.5) rotate(-30)" text-anchor="middle" dy="4">17185</text><text transform="translate(942.6 416.0) rotate(-30)" text-anchor="middle" dy="4">17185</text><text transform="translate(1004.6 392.5) rotate(-30)" text-anchor="middle" dy="4">17185</text><text transform="translate(1066.6 416.0) rotate(-30)" text-anchor="middle" dy="4">17185</text><text transform="translate(1128.6 392.5) rotate(-30)" text-anchor="middle" dy="4">17185</text><text transform="translate(1190.6 416.0) rotate(-30)" text-anchor="middle" dy="4">17185</text><text transform="translate(1252.6 392.5) rotate(-30)" text-anchor="middle" dy="4">17185</text><text transform="translate(1314.6 416.0) rotate(-30)" text-anchor="middle" dy="4">17185</text><text transform="translate(1376.6 392.5) rotate(-30)" text-anchor="middle" dy="4">17185</text><text transform="translate(1438.6 416.0) rotate(-30)" text-anchor="middle" dy="4">17185</text><text transform="translate(-111.4 439.5) rotate(-30)" text-anchor="middle" dy="4">17185</text><text transform="translate(-49.4 463.0) rotate(-30)" text-anchor="middle" dy="4">17185</text><text transform="translate(12.6 439.5) rotate(-30)" text-anchor="middle" dy="4">17185</text><text transform="translate(74.6 463.0) rotate(-30)" text-anchor="middle" dy="4">17185</text><text transform="translate(136.6 439.5) rotate(-30)" text-anchor="middle" dy="4">17185</text><text transform="translate(198.6 463.0) rotate(-30)" text-anchor="middle" dy="4">17185</text><text transform="translate(260.6 439.5) rotate(-30)" text-anchor="middle" dy="4">17185</text><text transform="translate(322.6 463.0) rotate(-30)" text-anchor="middle" dy="4">17185</text><text transform="translate(384.6 439.5) rotate(-30)" text-anchor="middle" dy="4">17185</text><text transform="translate(446.6 463.0) rotate(-30)" text-anchor="middle" dy="4">17185</text><text transform="translate(508.6 439.5) rotate(-30)" text-anchor="middle" dy="4">17185</text><text transform="translate(570.6 463.0) rotate(-30)" text-anchor="middle" dy="4">17185</text><text transform="translate(632.6 439.5) rotate(-30)" text-anchor="middle" dy="4">17185</text><text transform="translate(694.6 463.0) rotate(-30)" text-anchor="middle" dy="4">17185</text><text transform="translate(756.6 439.5) rotate(-30)" text-anchor="middle" dy="4">17185</text><text transform="translate(818.6 463.0) rotate(-30)" text-anchor="middle" dy="4">17185</text><text transform="translate(880.6 439.5) rotate(-30)" text-anchor="middle" dy="4">17185</text><text transform="translate(942.6 463.0) rotate(-30)" text-anchor="middle" dy="4">17185</text><text transform="translate(1004.6 439.5) rotate(-30)" text-anchor="middle" dy="4">17185</text><text transform="translate(1066.6 463.0) rotate(-30)" text-anchor="middle" dy="4">17185</text><text transform="translate(1128.6 439.5) rotate(-30)" text-anchor="middle" dy="4">17185</text><text transform="translate(1190.6 463.0) rotate(-30)" text-anchor="middle" dy="4">17185</text><text transform="translate(1252.6 439.5) rotate(-30)" text-anchor="middle" dy="4">17185</text><text transform="translate(1314.6 463.0) rotate(-30)" text-anchor="middle" dy="4">17185</text><text transform="translate(1376.6 439.5) rotate(-30)" text-anchor="middle" dy="4">17185</text><text transform="translate(1438.6 463.0) rotate(-30)" text-anchor="middle" dy="4">17185</text><text transform="translate(-111.4 486.5) rotate(-30)" text-anchor="middle" dy="4">17185</text><text transform="translate(-49.4 510.0) rotate(-30)" text-anchor="middle" dy="4">17185</text><text transform="translate(12.6 486.5) rotate(-30)" text-anchor="middle" dy="4">17185</text><text transform="translate(74.6 510.0) rotate(-30)" text-anchor="middle" dy="4">17185</text><text transform="translate(136.6 486.5) rotate(-30)" text-anchor="middle" dy="4">17185</text><text transform="translate(198.6 510.0) rotate(-30)" text-anchor="middle" dy="4">17185</text><text transform="translate(260.6 486.5) rotate(-30)" text-anchor="middle" dy="4">17185</text><text transform="translate(322.6 510.0) rotate(-30)" text-anchor="middle" dy="4">17185</text><text transform="translate(384.6 486.5) rotate(-30)" text-anchor="middle" dy="4">17185</text><text transform="translate(446.6 510.0) rotate(-30)" text-anchor="middle" dy="4">17185</text><text transform="translate(508.6 486.5) rotate(-30)" text-anchor="middle" dy="4">17185</text><text transform="translate(570.6 510.0) rotate(-30)" text-anchor="middle" dy="4">17185</text><text transform="translate(632.6 486.5) rotate(-30)" text-anchor="middle" dy="4">17185</text><text transform="translate(694.6 510.0) rotate(-30)" text-anchor="middle" dy="4">17185</text><text transform="translate(756.6 486.5) rotate(-30)" text-anchor="middle" dy="4">17185</text><text transform="translate(818.6 510.0) rotate(-30)" text-anchor="middle" dy="4">17185</text><text transform="translate(880.6 486.5) rotate(-30)" text-anchor="middle" dy="4">17185</text><text transform="translate(942.6 510.0) rotate(-30)" text-anchor="middle" dy="4">17185</text><text transform="translate(1004.6 486.5) rotate(-30)" text-anchor="middle" dy="4">17185</text><text transform="translate(1066.6 510.0) rotate(-30)" text-anchor="middle" dy="4">17185</text><text transform="translate(1128.6 486.5) rotate(-30)" text-anchor="middle" dy="4">17185</text><text transform="translate(1190.6 510.0) rotate(-30)" text-anchor="middle" dy="4">17185</text><text transform="translate(1252.6 486.5) rotate(-30)" text-anchor="middle" dy="4">17185</text><text transform="translate(1314.6 510.0) rotate(-30)" text-anchor="middle" dy="4">17185</text><text transform="translate(1376.6 486.5) rotate(-30)" text-anchor="middle" dy="4">17185</text><text transform="translate(1438.6 510.0) rotate(-30)" text-anchor="middle" dy="4">17185</text><text transform="translate(-111.4 533.5) rotate(-30)" text-anchor="middle" dy="4">17185</text><text transform="translate(-49.4 557.0) rotate(-30)" text-anchor="middle" dy="4">17185</text><text transform="translate(12.6 533.5) rotate(-30)" text-anchor="middle" dy="4">17185</text><text transform="translate(74.6 557.0) rotate(-30)" text-anchor="middle" dy="4">17185</text><text transform="translate(136.6 533.5) rotate(-30)" text-anchor="middle" dy="4">17185</text><text transform="translate(198.6 557.0) rotate(-30)" text-anchor="middle" dy="4">17185</text><text transform="translate(260.6 533.5) rotate(-30)" text-anchor="middle" dy="4">17185</text><text transform="translate(322.6 557.0) rotate(-30)" text-anchor="middle" dy="4">17185</text><text transform="translate(384.6 533.5) rotate(-30)" text-anchor="middle" dy="4">17185</text><text transform="translate(446.6 557.0) rotate(-30)" text-anchor="middle" dy="4">17185</text><text transform="translate(508.6 533.5) rotate(-30)" text-anchor="middle" dy="4">17185</text><text transform="translate(570.6 557.0) rotate(-30)" text-anchor="middle" dy="4">17185</text><text transform="translate(632.6 533.5) rotate(-30)" text-anchor="middle" dy="4">17185</text><text transform="translate(694.6 557.0) rotate(-30)" text-anchor="middle" dy="4">17185</text><text transform="translate(756.6 533.5) rotate(-30)" text-anchor="middle" dy="4">17185</text><text transform="translate(818.6 557.0) rotate(-30)" text-anchor="middle" dy="4">17185</text><text transform="translate(880.6 533.5) rotate(-30)" text-anchor="middle" dy="4">17185</text><text transform="translate(942.6 557.0) rotate(-30)" text-anchor="middle" dy="4">17185</text><text transform="translate(1004.6 533.5) rotate(-30)" text-anchor="middle" dy="4">17185</text><text transform="translate(1066.6 557.0) rotate(-30)" text-anchor="middle" dy="4">17185</text><text transform="translate(1128.6 533.5) rotate(-30)" text-anchor="middle" dy="4">17185</text><text transform="translate(1190.6 557.0) rotate(-30)" text-anchor="middle" dy="4">17185</text><text transform="translate(1252.6 533.5) rotate(-30)" text-anchor="middle" dy="4">17185</text><text transform="translate(1314.6 557.0) rotate(-30)" text-anchor="middle" dy="4">17185</text><text transform="translate(1376.6 533.5) rotate(-30)" text-anchor="middle" dy="4">17185</text><text transform="translate(1438.6 557.0) rotate(-30)" text-anchor="middle" dy="4">17185</text><text transform="translate(-111.4 580.5) rotate(-30)" text-anchor="middle" dy="4">17185</text><text transform="translate(-49.4 604.0) rotate(-30)" text-anchor="middle" dy="4">17185</text><text transform="translate(12.6 580.5) rotate(-30)" text-anchor="middle" dy="4">17185</text><text transform="translate(74.6 604.0) rotate(-30)" text-anchor="middle" dy="4">17185</text><text transform="translate(136.6 580.5) rotate(-30)" text-anchor="middle" dy="4">17185</text><text transform="translate(198.6 604.0) rotate(-30)" text-anchor="middle" dy="4">17185</text><text transform="translate(260.6 580.5) rotate(-30)" text-anchor="middle" dy="4">17185</text><text transform="translate(322.6 604.0) rotate(-30)" text-anchor="middle" dy="4">17185</text><text transform="translate(384.6 580.5) rotate(-30)" text-anchor="middle" dy="4">17185</text><text transform="translate(446.6 604.0) rotate(-30)" text-anchor="middle" dy="4">17185</text><text transform="translate(508.6 580.5) rotate(-30)" text-anchor="middle" dy="4">17185</text><text transform="translate(570.6 604.0) rotate(-30)" text-anchor="middle" dy="4">17185</text><text transform="translate(632.6 580.5) rotate(-30)" text-anchor="middle" dy="4">17185</text><text transform="translate(694.6 604.0) rotate(-30)" text-anchor="middle" dy="4">17185</text><text transform="translate(756.6 580.5) rotate(-30)" text-anchor="middle" dy="4">17185</text><text transform="translate(818.6 604.0) rotate(-30)" text-anchor="middle" dy="4">17185</text><text transform="translate(880.6 580.5) rotate(-30)" text-anchor="middle" dy="4">17185</text><text transform="translate(942.6 604.0) rotate(-30)" text-anchor="middle" dy="4">17185</text><text transform="translate(1004.6 580.5) rotate(-30)" text-anchor="middle" dy="4">17185</text><text transform="translate(1066.6 604.0) rotate(-30)" text-anchor="middle" dy="4">17185</text><text transform="translate(1128.6 580.5) rotate(-30)" text-anchor="middle" dy="4">17185</text><text transform="translate(1190.6 604.0) rotate(-30)" text-anchor="middle" dy="4">17185</text><text transform="translate(1252.6 580.5) rotate(-30)" text-anchor="middle" dy="4">17185</text><text transform="translate(1314.6 604.0) rotate(-30)" text-anchor="middle" dy="4">17185</text><text transform="translate(1376.6 580.5) rotate(-30)" text-anchor="middle" dy="4">17185</text><text transform="translate(1438.6 604.0) rotate(-30)" text-anchor="middle" dy="4">17185</text><text transform="translate(-111.4 627.5) rotate(-30)" text-anchor="middle" dy="4">17185</text><text transform="translate(-49.4 651.0) rotate(-30)" text-anchor="middle" dy="4">17185</text><text transform="translate(12.6 627.5) rotate(-30)" text-anchor="middle" dy="4">17185</text><text transform="translate(74.6 651.0) rotate(-30)" text-anchor="middle" dy="4">17185</text><text transform="translate(136.6 627.5) rotate(-30)" text-anchor="middle" dy="4">17185</text><text transform="translate(198.6 651.0) rotate(-30)" text-anchor="middle" dy="4">17185</text><text transform="translate(260.6 627.5) rotate(-30)" text-anchor="middle" dy="4">17185</text><text transform="translate(322.6 651.0) rotate(-30)" text-anchor="middle" dy="4">17185</text><text transform="translate(384.6 627.5) rotate(-30)" text-anchor="middle" dy="4">17185</text><text transform="translate(446.6 651.0) rotate(-30)" text-anchor="middle" dy="4">17185</text><text transform="translate(508.6 627.5) rotate(-30)" text-anchor="middle" dy="4">17185</text><text transform="translate(570.6 651.0) rotate(-30)" text-anchor="middle" dy="4">17185</text><text transform="translate(632.6 627.5) rotate(-30)" text-anchor="middle" dy="4">17185</text><text transform="translate(694.6 651.0) rotate(-30)" text-anchor="middle" dy="4">17185</text><text transform="translate(756.6 627.5) rotate(-30)" text-anchor="middle" dy="4">17185</text><text transform="translate(818.6 651.0) rotate(-30)" text-anchor="middle" dy="4">17185</text><text transform="translate(880.6 627.5) rotate(-30)" text-anchor="middle" dy="4">17185</text><text transform="translate(942.6 651.0) rotate(-30)" text-anchor="middle" dy="4">17185</text><text transform="translate(1004.6 627.5) rotate(-30)" text-anchor="middle" dy="4">17185</text><text transform="translate(1066.6 651.0) rotate(-30)" text-anchor="middle" dy="4">17185</text><text transform="translate(1128.6 627.5) rotate(-30)" text-anchor="middle" dy="4">17185</text><text transform="translate(1190.6 651.0) rotate(-30)" text-anchor="middle" dy="4">17185</text><text transform="translate(1252.6 627.5) rotate(-30)" text-anchor="middle" dy="4">17185</text><text transform="translate(1314.6 651.0) rotate(-30)" text-anchor="middle" dy="4">17185</text><text transform="translate(1376.6 627.5) rotate(-30)" text-anchor="middle" dy="4">17185</text><text transform="translate(1438.6 651.0) rotate(-30)" text-anchor="middle" dy="4">17185</text><text transform="translate(-111.4 674.5) rotate(-30)" text-anchor="middle" dy="4">17185</text><text transform="translate(-49.4 698.0) rotate(-30)" text-anchor="middle" dy="4">17185</text><text transform="translate(12.6 674.5) rotate(-30)" text-anchor="middle" dy="4">17185</text><text transform="translate(74.6 698.0) rotate(-30)" text-anchor="middle" dy="4">17185</text><text transform="translate(136.6 674.5) rotate(-30)" text-anchor="middle" dy="4">17185</text><text transform="translate(198.6 698.0) rotate(-30)" text-anchor="middle" dy="4">17185</text><text transform="translate(260.6 674.5) rotate(-30)" text-anchor="middle" dy="4">17185</text><text transform="translate(322.6 698.0) rotate(-30)" text-anchor="middle" dy="4">17185</text><text transform="translate(384.6 674.5) rotate(-30)" text-anchor="middle" dy="4">17185</text><text transform="translate(446.6 698.0) rotate(-30)" text-anchor="middle" dy="4">17185</text><text transform="translate(508.6 674.5) rotate(-30)" text-anchor="middle" dy="4">17185</text><text transform="translate(570.6 698.0) rotate(-30)" text-anchor="middle" dy="4">17185</text><text transform="translate(632.6 674.5) rotate(-30)" text-anchor="middle" dy="4">17185</text><text transform="translate(694.6 698.0) rotate(-30)" text-anchor="middle" dy="4">17185</text><text transform="translate(756.6 674.5) rotate(-30)" text-anchor="middle" dy="4">17185</text><text transform="translate(818.6 698.0) rotate(-30)" text-anchor="middle" dy="4">17185</text><text transform="translate(880.6 674.5) rotate(-30)" text-anchor="middle" dy="4">17185</text><text transform="translate(942.6 698.0) rotate(-30)" text-anchor="middle" dy="4">17185</text><text transform="translate(1004.6 674.5) rotate(-30)" text-anchor="middle" dy="4">17185</text><text transform="translate(1066.6 698.0) rotate(-30)" text-anchor="middle" dy="4">17185</text><text transform="translate(1128.6 674.5) rotate(-30)" text-anchor="middle" dy="4">17185</text><text transform="translate(1190.6 698.0) rotate(-30)" text-anchor="middle" dy="4">17185</text><text transform="translate(1252.6 674.5) rotate(-30)" text-anchor="middle" dy="4">17185</text><text transform="translate(1314.6 698.0) rotate(-30)" text-anchor="middle" dy="4">17185</text><text transform="translate(1376.6 674.5) rotate(-30)" text-anchor="middle" dy="4">17185</text><text transform="translate(1438.6 698.0) rotate(-30)" text-anchor="middle" dy="4">17185</text></g></svg></body></html>
